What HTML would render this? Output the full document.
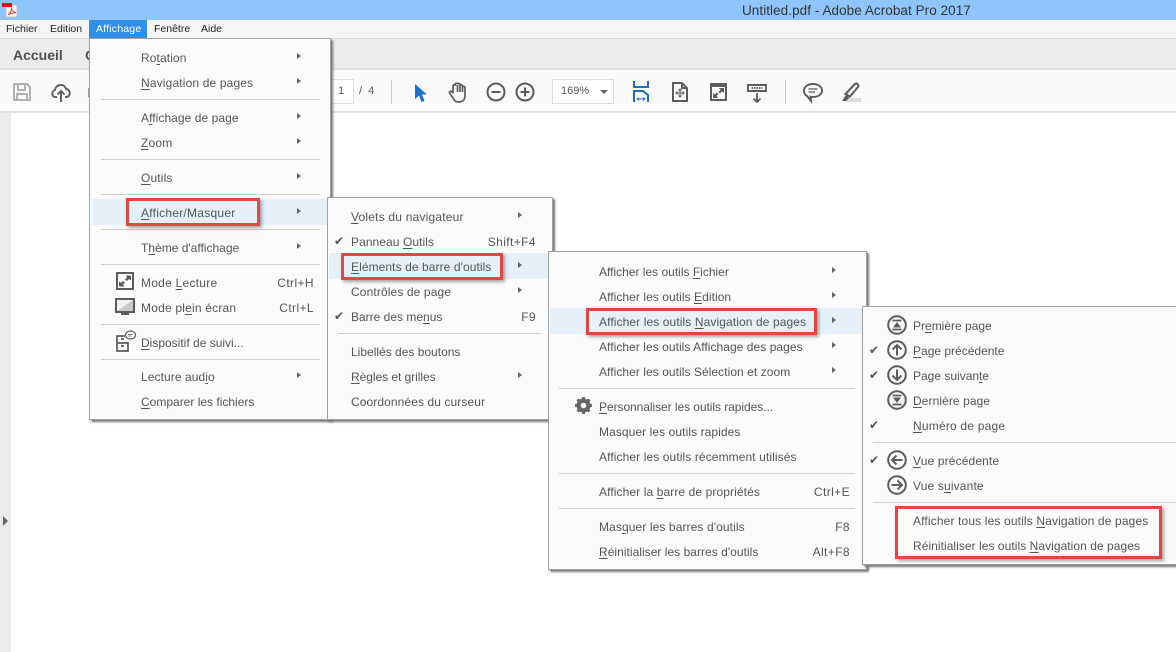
<!DOCTYPE html>
<html lang="fr"><head><meta charset="utf-8"><title>Untitled.pdf</title>
<style>
html,body{margin:0;padding:0;width:1176px;height:652px;overflow:hidden;background:#fff;font-family:"Liberation Sans",sans-serif;color:#4b4b4b}
.a{position:absolute}
.m{position:absolute;background:#fbfbfb;border:1px solid #a0a0a0;box-shadow:2px 2px 2px #777;box-sizing:border-box}
.t{position:absolute;font-size:12px;line-height:16px;white-space:nowrap;color:#555;margin-top:.5px}
.t u{text-underline-offset:2px;text-decoration-thickness:1px}
.r{position:absolute;font-size:12px;line-height:16px;white-space:nowrap;color:#555;text-align:right;letter-spacing:.4px;margin-top:.5px}
.s{position:absolute;height:1px;background:#cfcfcf}
.h{position:absolute;background:#e5f0fa}
.ar{position:absolute;width:0;height:0;border-left:4px solid #666;border-top:3.5px solid transparent;border-bottom:3.5px solid transparent}
.b{position:absolute;border:3px solid #e2473f;box-sizing:border-box;box-shadow:2px 2px 3px rgba(80,80,80,.5)}
.ck{position:absolute;font-size:12px;line-height:16px;color:#555;font-family:"DejaVu Sans",sans-serif}
.mb{position:absolute;top:22px;font-size:10.5px;line-height:14px;color:#222}
svg{position:absolute;overflow:visible}
</style></head><body>
<!-- title bar -->
<div class="a" style="left:0;top:0;width:1176px;height:20px;background:#8ec5fc"></div>
<div class="a" style="left:742px;top:3px;font-size:13.5px;line-height:16px;color:#333;white-space:nowrap;letter-spacing:.06px">Untitled.pdf - Adobe Acrobat Pro 2017</div>
<svg style="left:2px;top:2px" width="16" height="16" viewBox="0 0 16 16"><path d="M4 3H15V15H4Z" fill="#fff" stroke="#bbb"/><rect x="0" y="1" width="10" height="4" fill="#e01010"/><path d="M6 13C8 11 10 8 9.500 6C10 9 12 10 14 11C11 10.500 9 11 6 13Z" fill="none" stroke="#e04040"/></svg>
<!-- menubar -->
<div class="a" style="left:0;top:20px;width:1176px;height:18px;background:#f5f5f5"></div>
<div class="a" style="left:89px;top:20px;width:58px;height:18px;background:#2f8fe6"></div>
<div class="mb" style="left:6px">Fichier</div>
<div class="mb" style="left:50px">Edition</div>
<div class="mb" style="left:96px;color:#fff;letter-spacing:.2px">Affichage</div>
<div class="mb" style="left:154px">Fenêtre</div>
<div class="mb" style="left:201px">Aide</div>
<!-- tab bar -->
<div class="a" style="left:0;top:38px;width:1176px;height:32px;background:#ececec;border-top:1px solid #ddd;border-bottom:2px solid #dcdcdc;box-sizing:border-box"></div>
<div class="a" style="left:13px;top:46px;font-size:14px;line-height:18px;font-weight:bold;color:#505050">Accueil</div>
<div class="a" style="left:85px;top:46px;font-size:14px;line-height:18px;font-weight:bold;color:#505050">O</div>
<!-- toolbar -->
<div class="a" style="left:0;top:70px;width:1176px;height:43px;background:#fafafa;border-bottom:2px solid #e2e2e2;box-sizing:border-box"></div>
<div class="a" style="left:0;top:113px;width:11px;height:539px;background:#ebebeb"></div>
<div class="ar" style="left:3px;top:516px;border-left-width:5px;border-top-width:5px;border-bottom-width:5px;border-left-color:#666"></div>
<svg style="left:13px;top:83px" width="18" height="18" viewBox="0 0 18 18" fill="none" stroke="#b0b0b0" stroke-width="2"><path d="M1 1H14L17 4V17H1Z"/><path d="M5 1V7H12V1M4 17V11H14V17"/></svg>
<svg style="left:51px;top:83px" width="20" height="19" viewBox="0 0 20 19" fill="none" stroke="#5c5c5c" stroke-width="1.900"><path d="M6 14H4.500C.5 14 0 8 4 7C4.500 1.500 13 -.5 15 6C19.500 6 20.500 14 15 14H14"/><path d="M10 19V8M6.500 11.500L10 8L13.500 11.500"/></svg>
<div class="a" style="left:88px;top:88px;width:2px;height:9px;background:#999"></div>
<div class="a" style="left:330px;top:79px;width:24px;height:25px;background:#fff;border:1px solid #ddd;box-sizing:border-box"></div>
<div class="a" style="left:338px;top:84px;font-size:11px;line-height:14px;color:#555">1</div>
<div class="a" style="left:359px;top:84px;font-size:11px;line-height:14px;color:#555;white-space:nowrap">/&nbsp;&nbsp;4</div>
<div class="a" style="left:391px;top:80px;width:1px;height:24px;background:#ccc"></div>
<svg style="left:414px;top:83px" width="14" height="20" viewBox="0 0 14 20"><path d="M1 1V16L5 12.500L7.500 19L10.500 18L8 11.500H13Z" fill="#1c6fc9"/></svg>
<svg style="left:448px;top:82px" width="20" height="21" viewBox="0 0 20 21" fill="none" stroke="#5c5c5c" stroke-width="1.700"><path d="M5 11V4C5 2.500 7 2.500 7 4V2.500C7 1 9.500 1 9.500 2.500V2.500C9.500 1 12 1 12 2.500V3.500C12 2.500 14.500 2.500 14.500 4V5C14.500 4 17 4 17 5.500V14C17 18 14 20 11 20C8 20 6.500 19 5 16L1.500 11C1 9.500 3 8.500 4 10L5 11M9.500 3V10M12 3V10M14.500 4.500V10"/></svg>
<svg style="left:486px;top:82px" width="20" height="20" viewBox="0 0 20 20" fill="none" stroke="#5c5c5c" stroke-width="2"><circle cx="10" cy="10" r="8.500"/><path d="M5.500 10H14.500"/></svg>
<svg style="left:515px;top:82px" width="20" height="20" viewBox="0 0 20 20" fill="none" stroke="#5c5c5c" stroke-width="2"><circle cx="10" cy="10" r="8.500"/><path d="M5.500 10H14.500M10 5.500V14.500"/></svg>
<div class="a" style="left:552px;top:79px;width:62px;height:25px;background:#fff;border:1px solid #ddd;box-sizing:border-box"></div>
<div class="a" style="left:561px;top:84px;font-size:11px;line-height:14px;color:#555">169%</div>
<div class="a" style="left:600px;top:90px;width:0;height:0;border-top:4px solid #666;border-left:4px solid transparent;border-right:4px solid transparent"></div>
<svg style="left:633px;top:81px" width="16" height="22" viewBox="0 0 16 22" fill="none" stroke="#1c6fc9" stroke-width="2"><path d="M1 0V6H15V0M1 21V10H10L15 14V21"/><path d="M4 18H12M4 18L6 16.500M4 18L6 19.500M12 18L10 16.500M12 18L10 19.500" stroke-width="1"/></svg>
<svg style="left:672px;top:82px" width="16" height="20" viewBox="0 0 16 20" fill="none" stroke="#5c5c5c" stroke-width="2"><path d="M1 1H10L15 6V19H1ZM10 1V6H15"/><path d="M8 7V15M4 11H12M6.500 8.500L8 7L9.500 8.500M6.500 13.500L8 15L9.500 13.500M5.500 9.500L4 11L5.500 12.500M10.500 9.500L12 11L10.500 12.500" stroke-width="1.100"/></svg>
<svg style="left:710px;top:83px" width="17" height="18" viewBox="0 0 17 18"><rect x="1" y="1" width="15" height="16" fill="#fff" stroke="#5c5c5c" stroke-width="2"/><rect x="1" y="1" width="15" height="3" fill="#5c5c5c"/><path d="M14 5V10L12 8.500L10 10.500L8.500 9L10.500 7L9 5ZM3 15V10L5 11.500L7 9.500L8.500 11L6.500 13L8 15Z" fill="#5c5c5c"/></svg>
<svg style="left:747px;top:84px" width="20" height="19" viewBox="0 0 20 19"><rect x="1" y="1" width="18" height="6" fill="#fff" stroke="#5c5c5c" stroke-width="2"/><path d="M4.500 4H15.500" stroke="#5c5c5c" stroke-width="2" stroke-dasharray="1.500 1"/><path d="M10 9V18M6.500 14.500L10 18L13.500 14.500" fill="none" stroke="#5c5c5c" stroke-width="1.800"/></svg>
<div class="a" style="left:785px;top:80px;width:1px;height:24px;background:#ccc"></div>
<svg style="left:803px;top:83px" width="20" height="19" viewBox="0 0 20 19" fill="none" stroke="#5c5c5c" stroke-width="1.900"><path d="M10 1C15 1 19 3.500 19 7.500C19 11.500 15 14 10 14C9 14 8 14 7.500 13.800L8 18L4 13C2 12 1 10 1 7.500C1 3.500 5 1 10 1Z"/><path d="M5.500 6H14.500M5.500 9H12" stroke-width="1.200"/></svg>
<svg style="left:841px;top:82px" width="21" height="20" viewBox="0 0 21 20"><rect x="3" y="16" width="17" height="4" fill="#ddd"/><path d="M4.500 12L14 2C15.500 .5 18.500 3 17 5L9 14.500Z" fill="#fff" stroke="#5c5c5c" stroke-width="2"/><path d="M1 19L5 13L8.500 15.500L5 19Z" fill="#5c5c5c"/></svg>

<!-- menu 1 -->
<div class="m" style="left:89px;top:38px;width:242px;height:382px"></div>
<div class="h" style="left:92px;top:199px;width:235px;height:26px"></div>
<div class="s" style="left:101px;top:99px;width:219px"></div>
<div class="s" style="left:101px;top:159px;width:219px"></div>
<div class="s" style="left:101px;top:194px;width:219px"></div>
<div class="s" style="left:101px;top:229px;width:219px"></div>
<div class="s" style="left:101px;top:264px;width:219px"></div>
<div class="s" style="left:101px;top:324px;width:219px"></div>
<div class="s" style="left:101px;top:359px;width:219px"></div>
<div class="t" style="left:141px;top:49px;letter-spacing:.1px">Ro<u>t</u>ation</div><div class="ar" style="left:297px;top:53px"></div>
<div class="t" style="left:141px;top:74px;letter-spacing:.15px"><u>N</u>avigation de pages</div><div class="ar" style="left:297px;top:78px"></div>
<div class="t" style="left:141px;top:109px;letter-spacing:.06px">A<u>f</u>fichage de page</div><div class="ar" style="left:297px;top:113px"></div>
<div class="t" style="left:141px;top:134px;letter-spacing:.2px"><u>Z</u>oom</div><div class="ar" style="left:297px;top:138px"></div>
<div class="t" style="left:141px;top:169px;letter-spacing:.15px"><u>O</u>utils</div><div class="ar" style="left:297px;top:173px"></div>
<div class="t" style="left:141px;top:204px;letter-spacing:.25px"><u>A</u>fficher/Masquer</div><div class="ar" style="left:297px;top:208px"></div>
<div class="t" style="left:141px;top:239px">T<u>h</u>ème d'affichage</div><div class="ar" style="left:297px;top:243px"></div>
<svg style="left:116px;top:272px" width="18" height="18" viewBox="0 0 18 18"><rect x="1" y="1" width="16" height="16" fill="#fff" stroke="#5c5c5c" stroke-width="2"/><path d="M15 3.500V8.500L13 7L11 9L9 7.500L11 5.500L9.500 3.500ZM3 14.500V9.500L5 11L7 9L9 10.500L7 12.500L8.500 14.500Z" fill="#5c5c5c"/></svg>
<div class="t" style="left:141px;top:274px;letter-spacing:.25px">Mode <u>L</u>ecture</div><div class="r" style="right:862px;top:274px">Ctrl+H</div>
<svg style="left:115px;top:298px" width="20" height="18" viewBox="0 0 20 18"><rect x="1" y="1" width="18" height="13" fill="#f2f2f2" stroke="#5c5c5c" stroke-width="2"/><path d="M2 13L18 2V13Z" fill="#c8c8c8"/><rect x="6" y="14" width="8" height="3" fill="#5c5c5c"/></svg>
<div class="t" style="left:141px;top:299px;letter-spacing:.2px">Mode pl<u>e</u>in écran</div><div class="r" style="right:862px;top:299px">Ctrl+L</div>
<svg style="left:115px;top:330px" width="22" height="22" viewBox="0 0 22 22" fill="none" stroke="#5c5c5c" stroke-width="1.700"><path d="M10 6H2V21H13V12"/><path d="M2 13H13M6 9H9M6 16H9"/><ellipse cx="15.500" cy="5" rx="5" ry="4" fill="#fff" stroke-width="1.200"/><path d="M13 4.500H18M13 6H16.500" stroke-width=".8"/></svg>
<div class="t" style="left:141px;top:334px"><u>D</u>ispositif de suivi...</div>
<div class="t" style="left:141px;top:368px;letter-spacing:.08px">Lecture aud<u>i</u>o</div><div class="ar" style="left:297px;top:372px"></div>
<div class="t" style="left:141px;top:393px"><u>C</u>omparer les fichiers</div>

<!-- menu 2 -->
<div class="m" style="left:327px;top:197px;width:226px;height:223px"></div>
<div class="h" style="left:329px;top:253px;width:222px;height:26px"></div>
<div class="s" style="left:338px;top:333px;width:203px"></div>
<div class="t" style="left:351px;top:208px;letter-spacing:.2px"><u>V</u>olets du navigateur</div><div class="ar" style="left:518px;top:212px"></div>
<div class="ck" style="left:334px;top:233px">✔</div>
<div class="t" style="left:351px;top:233px;letter-spacing:.07px">Panneau <u>O</u>utils</div><div class="r" style="right:640px;top:233px">Shift+F4</div>
<div class="t" style="left:351px;top:258px;letter-spacing:.08px"><u>E</u>léments de barre d'outils</div><div class="ar" style="left:518px;top:262px"></div>
<div class="t" style="left:351px;top:283px;letter-spacing:.12px">Contrôles de page</div><div class="ar" style="left:518px;top:287px"></div>
<div class="ck" style="left:334px;top:308px">✔</div>
<div class="t" style="left:351px;top:308px">Barre des me<u>n</u>us</div><div class="r" style="right:640px;top:308px">F9</div>
<div class="t" style="left:351px;top:343px">Libellés des boutons</div>
<div class="t" style="left:351px;top:368px;letter-spacing:-.05px"><u>R</u>ègles et grilles</div><div class="ar" style="left:518px;top:372px"></div>
<div class="t" style="left:351px;top:393px;letter-spacing:.09px">Coordonnées du curseur</div>

<!-- menu 3 -->
<div class="m" style="left:548px;top:251px;width:319px;height:319px"></div>
<div class="h" style="left:550px;top:308px;width:315px;height:26px"></div>
<div class="s" style="left:559px;top:388px;width:296px"></div>
<div class="s" style="left:559px;top:473px;width:296px"></div>
<div class="s" style="left:559px;top:508px;width:296px"></div>
<div class="t" style="left:599px;top:263px">Afficher les outils <u>F</u>ichier</div><div class="ar" style="left:832px;top:267px"></div>
<div class="t" style="left:599px;top:288px;letter-spacing:.06px">Afficher les outils <u>E</u>dition</div><div class="ar" style="left:832px;top:292px"></div>
<div class="t" style="left:599px;top:313px;letter-spacing:.1px">Afficher les outils <u>N</u>avigation de pages</div><div class="ar" style="left:832px;top:317px"></div>
<div class="t" style="left:599px;top:338px;letter-spacing:.05px">Afficher les outils Affichage des pages</div><div class="ar" style="left:832px;top:342px"></div>
<div class="t" style="left:599px;top:363px;letter-spacing:.055px">Afficher les outils Sélection et zoom</div><div class="ar" style="left:832px;top:367px"></div>
<svg style="left:574px;top:396px" width="19" height="19" viewBox="0 0 19 19"><circle cx="9.500" cy="9.500" r="5.200" fill="none" stroke="#666" stroke-width="3.600"/><path d="M9.500 1V18M1 9.500H18M3.500 3.500L15.500 15.500M15.500 3.500L3.500 15.500" stroke="#666" stroke-width="3"/><circle cx="9.500" cy="9.500" r="2.800" fill="#fbfbfb"/></svg>
<div class="t" style="left:599px;top:398px;letter-spacing:-.06px"><u>P</u>ersonnaliser les outils rapides...</div>
<div class="t" style="left:599px;top:423px;letter-spacing:.08px">Masquer les outils rapides</div>
<div class="t" style="left:599px;top:448px;letter-spacing:.1px">Afficher les outils récemment utilisés</div>
<div class="t" style="left:599px;top:483px;letter-spacing:.1px">Afficher la <u>b</u>arre de propriétés</div><div class="r" style="right:326px;top:483px">Ctrl+E</div>
<div class="t" style="left:599px;top:518px;letter-spacing:.1px">Mas<u>q</u>uer les barres d'outils</div><div class="r" style="right:326px;top:518px">F8</div>
<div class="t" style="left:599px;top:543px;letter-spacing:.03px"><u>R</u>éinitialiser les barres d'outils</div><div class="r" style="right:326px;top:543px">Alt+F8</div>

<!-- menu 4 -->
<div class="m" style="left:862px;top:306px;width:320px;height:259px"></div>
<div class="s" style="left:873px;top:442px;width:303px"></div>
<div class="s" style="left:873px;top:502px;width:303px"></div>
<svg style="left:887px;top:315px" width="20" height="20" viewBox="0 0 20 20" fill="none" stroke="#5c5c5c" stroke-width="2"><circle cx="10" cy="10" r="8.800"/><path d="M5.500 5.500H14.500M5.500 14.500H14.500" stroke-width="1.800"/><path d="M10 7L14 12.500H6Z" fill="#5c5c5c" stroke="none"/></svg>
<div class="t" style="left:913px;top:317px">Pr<u>e</u>mière page</div>
<div class="ck" style="left:869px;top:342px">✔</div>
<svg style="left:887px;top:340px" width="20" height="20" viewBox="0 0 20 20" fill="none" stroke="#5c5c5c" stroke-width="2"><circle cx="10" cy="10" r="8.800"/><path d="M10 15.500V5M5.500 9.500L10 5L14.500 9.500"/></svg>
<div class="t" style="left:913px;top:342px"><u>P</u>age précédente</div>
<div class="ck" style="left:869px;top:367px">✔</div>
<svg style="left:887px;top:365px" width="20" height="20" viewBox="0 0 20 20" fill="none" stroke="#5c5c5c" stroke-width="2"><circle cx="10" cy="10" r="8.800"/><path d="M10 4.500V15M5.500 10.500L10 15L14.500 10.500"/></svg>
<div class="t" style="left:913px;top:367px">Page suivan<u>t</u>e</div>
<svg style="left:887px;top:390px" width="20" height="20" viewBox="0 0 20 20" fill="none" stroke="#5c5c5c" stroke-width="2"><circle cx="10" cy="10" r="8.800"/><path d="M5.500 5.500H14.500M5.500 14.500H14.500" stroke-width="1.800"/><path d="M10 13L14 7.500H6Z" fill="#5c5c5c" stroke="none"/></svg>
<div class="t" style="left:913px;top:392px;letter-spacing:.08px"><u>D</u>ernière page</div>
<div class="ck" style="left:869px;top:417px">✔</div>
<div class="t" style="left:913px;top:417px;letter-spacing:.2px"><u>N</u>uméro de page</div>
<div class="ck" style="left:869px;top:452px">✔</div>
<svg style="left:887px;top:450px" width="20" height="20" viewBox="0 0 20 20" fill="none" stroke="#5c5c5c" stroke-width="2"><circle cx="10" cy="10" r="8.800"/><path d="M15.500 10H5M9.500 5.500L5 10L9.500 14.500"/></svg>
<div class="t" style="left:913px;top:452px;letter-spacing:.14px"><u>V</u>ue précédente</div>
<svg style="left:887px;top:475px" width="20" height="20" viewBox="0 0 20 20" fill="none" stroke="#5c5c5c" stroke-width="2"><circle cx="10" cy="10" r="8.800"/><path d="M4.500 10H15M10.500 5.500L15 10L10.500 14.500"/></svg>
<div class="t" style="left:913px;top:477px;letter-spacing:.15px">Vue s<u>u</u>ivante</div>
<div class="t" style="left:913px;top:512px;letter-spacing:.14px">Afficher tous les outils <u>N</u>avigation de pages</div>
<div class="t" style="left:913px;top:537px;letter-spacing:.05px">Réinitialiser les outils <u>N</u>avigation de pages</div>

<!-- red boxes -->
<div class="b" style="left:126px;top:198px;width:134px;height:28px"></div>
<div class="b" style="left:341px;top:253px;width:162px;height:27px"></div>
<div class="b" style="left:586px;top:308px;width:231px;height:27px"></div>
<div class="b" style="left:895px;top:506px;width:267px;height:53px"></div>
</body></html>
